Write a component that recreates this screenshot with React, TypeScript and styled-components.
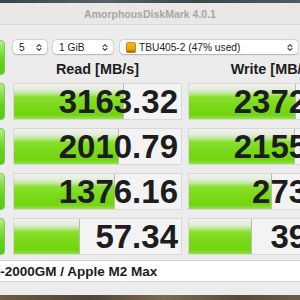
import React from 'react'
import { styled, createGlobalStyle } from 'styled-components'

const GlobalStyle = createGlobalStyle`
  html, body {
    margin: 0;
    padding: 0;
    width: 300px;
    height: 300px;
    overflow: hidden;
  }
  body {
    font-family: "Liberation Sans", Arial, sans-serif;
    background: #5d5245;
  }
`

// Desktop behind the window (only thin strips visible)
const SDesktop = styled.div`
  width: 300px;
  height: 300px;
  overflow: hidden;
  display: flex;
  flex-direction: column;
  background: linear-gradient(90deg, #6e5c44 0%, #4f4436 30%, #7a6a52 55%, #584a3a 80%, #6b5b46 100%);
`

const SDesktopTop = styled.div`
  height: 3px;
  flex-shrink: 0;
  background: linear-gradient(90deg, #3c424a 0%, #58606a 35%, #3e444c 65%, #525960 100%);
`

const SWindow = styled.div`
  width: 420px;
  margin-left: -60px;
  flex-shrink: 0;
  background: #ececec;
`

const STitleBar = styled.div`
  height: 21px;
  display: flex;
  align-items: center;
  justify-content: center;
  background: #e8e8e8;
  border-bottom: 1px solid #d6d6d6;
  color: #a6a6a6;
  font-size: 10.5px;
  font-weight: bold;
`

const SBody = styled.div`
  padding: 15px 0 13px 5px;
  display: flex;
  flex-direction: column;
`

const SHeader = styled.div`
  display: flex;
  height: 37px;
  margin-bottom: 6px;
`

// Green run buttons on the left (mostly cut off)
const SRunButton = styled.div<{ $tall?: boolean }>`
  box-sizing: border-box;
  width: 60px;
  height: ${p => (p.$tall ? 35 : 37)}px;
  margin-right: 8px;
  flex-shrink: 0;
  border-radius: 4px;
  border: 1px solid #86c25a;
  background: linear-gradient(180deg, #b6ec90 0%, #86e044 30%, #64d41a 60%, #58cc0e 100%);
`

const SHeaderRight = styled.div`
  display: flex;
  flex-direction: column;
`

const SControls = styled.div`
  display: flex;
  height: 14px;
  gap: 6px;
`

const SSelect = styled.div<{ $w: number; $gapLeft?: number }>`
  box-sizing: border-box;
  width: ${p => p.$w}px;
  height: 14px;
  margin-left: ${p => p.$gapLeft || 0}px;
  display: flex;
  align-items: center;
  gap: 3px;
  padding: 0 5px 0 6px;
  background: #ffffff;
  border-radius: 3.5px;
  box-shadow: 0 0 0 0.5px rgba(0, 0, 0, 0.14), 0 0.5px 1.5px rgba(0, 0, 0, 0.18);
  color: #222;
  font-size: 10.2px;
  white-space: nowrap;

  svg.chev {
    margin-left: auto;
    flex-shrink: 0;
  }
`

const SLabels = styled.div`
  display: flex;
  gap: 6px;
  margin-top: auto;
`

const SLabel = styled.div`
  width: 169px;
  text-align: center;
  font-size: 14.4px;
  line-height: 15px;
  font-weight: bold;
  color: #1c1c1c;
  white-space: nowrap;
`

const SRows = styled.div`
  display: flex;
  flex-direction: column;
  gap: 8px;
`

const SRow = styled.div`
  display: flex;
  gap: 6px;
`

const SRowButton = styled(SRunButton)`
  margin-right: 2px;
`

const barGradient = `linear-gradient(180deg, #f1f3ef 0%, #e3ecdb 16%, #bde896 27%, #88e02c 37%, #7bd91a 60%, #72d40e 88%, #96e24e 100%)`

// Result tile with log-scaled bar as background
const STile = styled.div<{ $fill: number }>`
  box-sizing: border-box;
  width: 169px;
  height: 37px;
  flex-shrink: 0;
  border: 1px solid #d8d8d8;
  background:
    linear-gradient(#b4bfae, #b4bfae) ${p => p.$fill}px 0 / 1px 100% no-repeat,
    ${barGradient} 0 0 / ${p => p.$fill}px 100% no-repeat,
    #f3f3f3;
  padding-right: 3px;
  text-align: right;
  font-size: 33px;
  line-height: 35px;
  font-weight: bold;
  color: #1d1d1d;
  white-space: nowrap;
`

const SInfoField = styled.div`
  box-sizing: border-box;
  margin-top: 5px;
  width: 412px;
  height: 22px;
  padding-left: 4px;
  display: flex;
  align-items: center;
  background: #ffffff;
  border: 1px solid #d2d2d2;
  font-size: 13.5px;
  font-weight: bold;
  color: #1c1c1c;
  white-space: nowrap;
`

const Chevron = () => (
  <svg className='chev' width='6' height='9' viewBox='0 0 6 9'>
    <path d='M1 3.6 L3 1.6 L5 3.6 M1 5.4 L3 7.4 L5 5.4' fill='none' stroke='#3a3a3a' strokeWidth='1.1' strokeLinecap='round' strokeLinejoin='round' />
  </svg>
)

const DriveIcon = () => (
  <svg width='10' height='11' viewBox='0 0 10 11'>
    <defs>
      <linearGradient id='drv' x1='0' y1='0' x2='0' y2='1'>
        <stop offset='0' stopColor='#f8bb1c' />
        <stop offset='1' stopColor='#e69400' />
      </linearGradient>
    </defs>
    <rect x='0.5' y='0.5' width='9' height='10' rx='1.2' fill='url(#drv)' stroke='#b87800' strokeWidth='0.8' />
    <rect x='1' y='8.6' width='8' height='1.6' fill='#a86c00' />
  </svg>
)

const barWidth = (v: number) => Math.round(25 * Math.log10(v) + 21.5)

const results = [
  { read: 3163.32, write: 2372.83 },
  { read: 2010.79, write: 2155.41 },
  { read: 1376.16, write: 273.96 },
  { read: 57.34, write: 39.87 },
]

export default function App() {
  return (
    <>
      <GlobalStyle />
      <SDesktop>
        <SDesktopTop />
        <SWindow>
          <STitleBar>AmorphousDiskMark 4.0.1</STitleBar>
          <SBody>
            <SHeader>
              <SRunButton $tall />
              <SHeaderRight>
                <SControls>
                  <SSelect $w={34}>
                    5<Chevron />
                  </SSelect>
                  <SSelect $w={60}>
                    1 GiB<Chevron />
                  </SSelect>
                  <SSelect $w={178} $gapLeft={1}>
                    <DriveIcon />
                    TBU405-2 (47% used)
                    <Chevron />
                  </SSelect>
                </SControls>
                <SLabels>
                  <SLabel>Read [MB/s]</SLabel>
                  <SLabel>Write [MB/s]</SLabel>
                </SLabels>
              </SHeaderRight>
            </SHeader>
            <SRows>
              {results.map((r, i) => (
                <SRow key={i}>
                  <SRowButton />
                  <STile $fill={barWidth(r.read)}>{r.read.toFixed(2)}</STile>
                  <STile $fill={barWidth(r.write)}>{r.write.toFixed(2)}</STile>
                </SRow>
              ))}
            </SRows>
            <SInfoField>TBU405-2000GM / Apple M2 Max</SInfoField>
          </SBody>
        </SWindow>
      </SDesktop>
    </>
  )
}
